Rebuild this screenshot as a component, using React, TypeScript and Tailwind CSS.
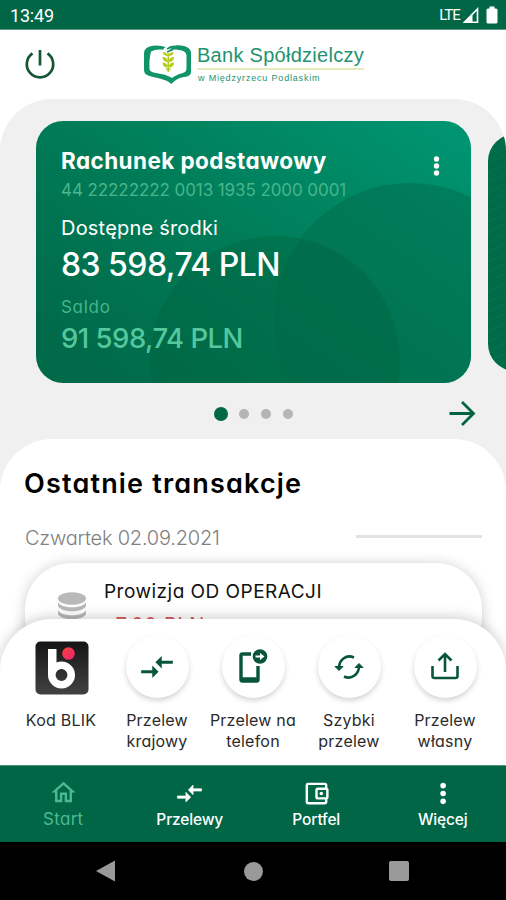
import React from 'react';

const COMPARE = 'M9.01 14H2v2h7.01v3L13 15l-3.99-4v3zm5.98-1v-3H22V8h-7.01V5L11 9l3.99 4z';

function StatusBar() {
  return (
    <div className="flex h-[30px] shrink-0 items-center bg-[#006646] pl-[10px] pr-[8px] text-white border-b border-[#5f9c84]">
      <span className="mt-[3px] font-[Roboto] text-[18px] leading-none tracking-[-0.2px]">13:49</span>
      <span className="ml-auto mt-px font-[Roboto] text-[15px] leading-none tracking-[-0.9px]">LTE</span>
      <svg className="ml-[3px] mt-px" width="17" height="17" viewBox="0 0 17 17" fill="none">
        <path d="M1.500 15.200H14.500V2Z" stroke="#fff" strokeWidth="1.600" />
        <path d="M1.500 15.500H9.500V7.500Z" fill="#fff" />
      </svg>
      <svg className="ml-[6px]" width="12" height="18" viewBox="0 0 12 18">
        <path d="M3.500 0.500h5v2h1.500a1.500 1.500 0 0 1 1.500 1.500V16a1.500 1.500 0 0 1-1.500 1.500h-8A1.500 1.500 0 0 1 .5 16V4A1.500 1.500 0 0 1 2 2.500h1.500z" fill="#fff" />
      </svg>
    </div>
  );
}

function Header() {
  return (
    <header className="flex h-[69px] shrink-0 bg-white pl-[24px]">
      <svg className="mt-[18px]" width="32" height="32" viewBox="0 0 32 32" fill="none" stroke="#175634" strokeWidth="2.700">
        <path d="M16 2v15.500M8.500 5.300a13.200 13.200 0 1 0 15 0" />
      </svg>
      <svg className="ml-[87px] mt-[14px]" width="50" height="41" viewBox="0 0 50 41" fill="none">
        <path
          fillRule="evenodd"
          d="M3 4.500C9 0 17 1.500 24 3.500C31 .5 41 .5 46 4.500Q48 6 48 9V28Q48 31 44 32.500C38 33.500 33 34.500 28.500 40C23 34.500 13 34.500 5 31.500Q1 30 1 26V9Q1 6 3 4.500ZM8 7.500Q6 15 6.500 25Q6.500 27 9 28C16 30 23 30 29 34C34 30 38 30 41 28.500Q43.500 27.500 43.500 24V11Q43 8 40 7C34 5 29 5 24 7C18 4.500 12 5.500 8 7.500Z"
          fill="#119469"
        />
        <path d="M22 3.500L27 1L24.500 5L29 4L24 8L20 5Z" fill="#fff" />
        <path d="M24 5L28 3M24 8L30 5.500" stroke="#119469" strokeWidth="1.500" />
        <g fill="#b5ce20">
          <path d="M20 8q4 0 5 4q-5 0-5-4zM30.500 8q-4 0-5 4q5 0 5-4zM19.500 13q5 0 5.500 5q-5.500 0-5.500-5zM31 13q-5 0-5.500 5q5.500 0 5.500-5zM19.500 18.500q5 0 5.500 5q-5.500 0-5.500-5zM31 18.500q-5 0-5.500 5q5.500 0 5.500-5z" />
          <path d="M24.500 9h1.500v19h-1.500zM22 24.500h6.500l-3.200 3z" />
        </g>
      </svg>
      <div className="ml-[4px] mt-[13px] flex w-[167px] flex-col whitespace-nowrap font-['Liberation_Sans',sans-serif] text-[#23936f]">
        <span className="h-[25px] text-[20px] leading-[25px] tracking-[0.28px]">Bank Spółdzielczy</span>
        <span className="h-[2px] bg-[#e4eebc]" />
        <span className="pl-px text-[9px] leading-[16px] tracking-[0.82px]">w Międzyrzecu Podlaskim</span>
      </div>
    </header>
  );
}

function AccountCard() {
  return (
    <section className="relative h-[262px] w-[435px] shrink-0 overflow-hidden rounded-[27px] bg-linear-[35deg,#006a49_10%,#007c58_50%,#009470_95%] px-[25px] text-white">
      <svg className="absolute inset-0" width="435" height="262" viewBox="0 0 435 262">
        <circle cx="374" cy="198" r="136" fill="#006b4b" fillOpacity=".5" />
        <circle cx="239" cy="240" r="125" fill="#00633f" fillOpacity=".4" />
      </svg>
      <div className="relative flex flex-col whitespace-nowrap">
        <div className="mt-[24px] flex h-[32px] items-center">
          <h2 className="text-[22.500px] font-bold tracking-[0.42px]">Rachunek podstawowy</h2>
          <svg className="ml-auto mr-[6px] mt-[10px]" width="7" height="20" viewBox="0 0 7 20" fill="#fff">
            <circle cx="3.500" cy="3" r="2.700" /><circle cx="3.500" cy="10" r="2.700" /><circle cx="3.500" cy="17" r="2.700" />
          </svg>
        </div>
        <p className="h-[26px] text-[17px] leading-[27px] tracking-[-0.08px] text-[#48b58c]">44 22222222 0013 1935 2000 0001</p>
        <p className="mt-[9px] h-[32px] text-[20px] leading-[32px] tracking-[0.2px]">Dostępne środki</p>
        <p className="h-[41px] text-[32px] font-medium leading-[42px] tracking-[-0.55px]">83 598,74 PLN</p>
        <p className="mt-[9px] h-[26px] text-[17px] leading-[26px] tracking-[0.7px] text-[#45b58b]">Saldo</p>
        <p className="h-[36px] text-[27.500px] font-medium leading-[36px] tracking-[-0.5px] text-[#55c79d]">91 598,74 PLN</p>
      </div>
    </section>
  );
}

function Accounts() {
  return (
    <div className="shrink-0 bg-white">
      <div className="h-[340px] overflow-hidden rounded-t-[52px] bg-[#f0f0f0] pt-[22px]">
        <div className="flex items-center gap-[17px] pl-[36px]">
          <AccountCard />
          <div className="h-[237px] w-[200px] shrink-0 rounded-[27px] bg-[repeating-linear-gradient(155deg,#006b48_0px,#006b48_7px,#05724d_8px,#006b48_9px)]" />
        </div>
        <div className="flex h-[61px] items-center pl-[214px] pr-[30px]">
          <span className="size-[14px] rounded-full bg-[#006846]" />
          <span className="ml-[11px] size-[10px] rounded-full bg-[#b5b5b5]" />
          <span className="ml-[12px] size-[10px] rounded-full bg-[#b5b5b5]" />
          <span className="ml-[12px] size-[10px] rounded-full bg-[#b5b5b5]" />
          <svg className="ml-auto" width="27" height="27" viewBox="0 0 27 27" fill="none" stroke="#05633f" strokeWidth="2.800">
            <path d="M.5 13.500H25M13 2l11.500 11.500L13 25" />
          </svg>
        </div>
      </div>
    </div>
  );
}

function Transactions() {
  return (
    <div className="h-[180px] shrink-0 bg-[#f0f0f0]">
      <section className="flex h-[270px] flex-col whitespace-nowrap rounded-t-[52px] bg-white px-[24px]">
        <h1 className="mt-[26px] h-[36px] text-[27px] font-semibold leading-[37px] tracking-[1.180px] text-black">Ostatnie transakcje</h1>
        <div className="mt-[22px] flex h-[30px] items-center">
          <span className="pl-px text-[20px] font-light tracking-[-0.2px] text-[#808080]">Czwartek 02.09.2021</span>
          <span className="ml-auto mt-[-3px] h-[3px] w-[126px] bg-[#e2e2e2]" />
        </div>
        <div className="ml-px mt-[10px] flex h-[100px] rounded-[46px] bg-white pl-[31px] shadow-[0_1px_14px_rgba(0,0,0,0.2)]">
          <svg className="mt-[28px]" width="32" height="46" viewBox="0 0 32 46" fill="#b9b9b9">
            <ellipse cx="16" cy="7.500" rx="14" ry="6.300" />
            <path d="M2 11c3 7 25 7 28 0v4c-3 7-25 7-28 0zM2 19c3 7 25 7 28 0v4c-3 7-25 7-28 0zM2 27c3 7 25 7 28 0v4c-3 7-25 7-28 0z" />
          </svg>
          <div className="ml-[16px] mt-[14px] flex flex-col">
            <span className="text-[19px] leading-[30px] tracking-[0.48px] text-[#111]">Prowizja OD OPERACJI</span>
            <span className="mt-[4px] pl-[2px] text-[20px] leading-[28px] tracking-[0.7px] text-[#d9555b]">-7,00 PLN</span>
          </div>
        </div>
      </section>
    </div>
  );
}

function Stroke({ children }: { children: React.ReactNode }) {
  return (
    <svg width="38" height="38" viewBox="0 0 38 38" fill="none" stroke="#08563a" strokeWidth="2.600">
      {children}
    </svg>
  );
}

function Action({ icon, lines, plain }: { icon: React.ReactNode; lines: string[]; plain?: boolean }) {
  return (
    <div className="flex w-[96px] flex-col items-center">
      <div className={plain ? 'flex h-[63px] items-center justify-center pt-[2px]' : 'flex size-[63px] items-center justify-center rounded-full bg-white shadow-[0_3px_5px_rgba(0,0,0,0.16)]'}>
        {icon}
      </div>
      <div className="mt-[12px] flex flex-col items-center whitespace-nowrap text-[16px] leading-[20.500px] tracking-[0.220px] text-[#2b2b2b]">
        {lines.map((l) => <span key={l}>{l}</span>)}
      </div>
    </div>
  );
}

function QuickActions() {
  return (
    <section className="relative z-10 flex h-[146px] shrink-0 items-start rounded-t-[52px] bg-white pl-[13px] pt-[16px] shadow-[0_-3px_12px_rgba(0,0,0,0.17)]">
      <Action
        plain
        lines={['Kod BLIK']}
        icon={
          <svg className="ml-px" width="54" height="54" viewBox="0 0 54 54">
            <defs>
              <linearGradient id="blik" x1="0" y1="0" x2="0" y2="1"><stop stopColor="#151515" /><stop offset="1" stopColor="#424242" /></linearGradient>
              <linearGradient id="dot" x1="0" y1="0" x2="1" y2="1"><stop stopColor="#fb4434" /><stop offset="1" stopColor="#eb2277" /></linearGradient>
            </defs>
            <rect x=".5" y=".5" width="53" height="53" rx="5" fill="url(#blik)" />
            <circle cx="26.500" cy="34" r="9.700" fill="none" stroke="#fff" strokeWidth="7.600" />
            <path d="M13 8h8.500v18l-4 8H13z" fill="#fff" />
            <circle cx="33.500" cy="12.500" r="6.300" fill="url(#dot)" />
          </svg>
        }
      />
      <Action
        lines={['Przelew', 'krajowy']}
        icon={<svg width="38" height="38" viewBox="0 0 24 24" fill="#08563a"><path d={COMPARE} /></svg>}
      />
      <Action
        lines={['Przelew na', 'telefon']}
        icon={
          <Stroke>
            <path d="M17 6H8.500a1.500 1.500 0 0 0-1.500 1.500v24a1.500 1.500 0 0 0 1.500 1.500h14a1.500 1.500 0 0 0 1.500-1.500V18" strokeWidth="3.400" />
            <path d="M6.500 31.500h18" strokeWidth="4.500" />
            <circle cx="26" cy="8.500" r="7.300" fill="#08563a" stroke="none" />
            <path d="M21.500 7.500h4.500V5l4.500 3.500L26 12V9.500h-4.500z" fill="#fff" stroke="none" />
          </Stroke>
        }
      />
      <Action
        lines={['Szybki', 'przelew']}
        icon={
          <Stroke>
            <path d="M24 9.500C16 6 9 12 9 20M14 28.500C22 32 29 26 29 18" />
            <path d="M5 18.500h8l-4 4zM33 19.500h-8l4-4z" fill="#08563a" strokeWidth="1" />
          </Stroke>
        }
      />
      <Action
        lines={['Przelew', 'własny']}
        icon={<Stroke><path d="M6.500 18v10a2 2 0 0 0 2 2h21a2 2 0 0 0 2-2V18M19 24V6M12.500 12.500L19 6l6.500 6.500" /></Stroke>}
      />
    </section>
  );
}

function NavItem({ label, icon, active }: { label: string; icon: React.ReactNode; active?: boolean }) {
  return (
    <div className={active ? 'flex flex-1 flex-col items-center text-[17px] tracking-[0.3px] text-[#4bba91]' : 'flex flex-1 flex-col items-center text-[15.500px] font-medium tracking-[-0.15px] text-white'}>
      <svg className={active ? 'mt-[12px]' : 'mt-[13px]'} width="29" height="29" viewBox="0 0 24 24" fill="currentColor">{icon}</svg>
      <span className="leading-[24px]">{label}</span>
    </div>
  );
}

export default function App() {
  return (
    <div className="flex h-[900px] w-[506px] flex-col overflow-hidden bg-white font-['Inter',sans-serif] [font-feature-settings:'cv11']">
      <StatusBar />
      <Header />
      <Accounts />
      <Transactions />
      <QuickActions />
      <nav className="relative z-10 flex h-[77px] shrink-0 border-t border-[#4b947a] bg-[#006646]">
        <NavItem active label="Start" icon={<path d="M12 5.690l5 4.500V18h-2v-6H9v6H7v-7.810l5-4.500M12 3L2 12h3v8h6v-6h2v6h6v-8h3L12 3z" />} />
        <NavItem label="Przelewy" icon={<path d={COMPARE} stroke="currentColor" strokeWidth=".5" />} />
        <NavItem
          label="Portfel"
          icon={
            <>
              <path d="M21 7.280V5c0-1.100-.9-2-2-2H5a2 2 0 0 0-2 2v14c0 1.100.9 2 2 2h14c1.100 0 2-.9 2-2v-2.280A2 2 0 0 0 22 15V9a2 2 0 0 0-1-1.720zM20 9v6h-7V9h7zM5 19V5h14v2h-6c-1.100 0-2 .9-2 2v6c0 1.100.9 2 2 2h6v2H5z" />
              <circle cx="16" cy="12" r="1.500" />
            </>
          }
        />
        <NavItem label="Więcej" icon={<><circle cx="12.500" cy="5.500" r="2.300" /><circle cx="12.500" cy="12" r="2.300" /><circle cx="12.500" cy="18.500" r="2.300" /></>} />
      </nav>
      <div className="relative z-10 flex h-[58px] shrink-0 items-center bg-black pl-[96px]">
        <svg width="19" height="22" viewBox="0 0 19 22" fill="#999"><path d="M0 11L19 .5v21z" /></svg>
        <span className="ml-[129px] size-[19px] rounded-full bg-[#999]" />
        <span className="ml-[126px] size-[20px] rounded-[2px] bg-[#999]" />
      </div>
    </div>
  );
}
